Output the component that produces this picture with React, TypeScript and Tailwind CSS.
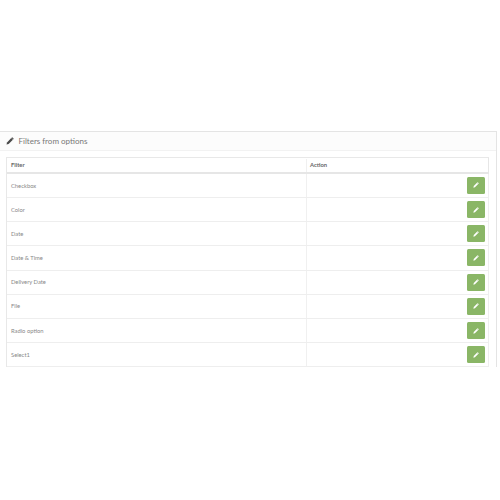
const rows = ["Checkbox", "Color", "Date", "Date & Time", "Delivery Date", "File", "Radio option", "Select1"];

function Pencil({ size, className }: { size: number; className: string }) {
  return (
    <svg width={size} height={size} viewBox="0 0 16 16" className={className} fill="currentColor">
      <path d="M1 15l1-4.2L10.6 2.2 13.8 5.4 5.2 14z" />
      <path d="M11.6 1.2c.5-.5 1.2-.5 1.7 0l1.5 1.5c.5.5.5 1.2 0 1.7l-.6.6L11 1.8z" />
    </svg>
  );
}

export default function App() {
  return (
    <div className="h-[500px] w-[500px] overflow-hidden bg-white pt-[131px] font-['Lato',sans-serif]">
      <div className="w-[497px] border-t border-r border-[#e4e4e4]">
        <div className="flex h-[19px] items-center gap-[4.5px] border-b border-[#f2f2f2] bg-[#fcfcfc] pl-[6px] text-[#777]">
          <Pencil size={8} className="text-[#4a4a4a]" />
          <span className="text-[8px] leading-none">Filters from options</span>
        </div>
        <div className="pt-[6px] pr-[7px] pl-[6px]">
          <div className="border-t border-l border-[#e8e8e8]">
            <div className="flex h-[15.8px] border-r border-b-2 border-[#e6e6e6] pt-[1px] text-[5.8px] font-bold text-[#666]">
              <div className="flex w-[300px] items-center border-r border-[#f0f0f0] pl-[4px]">Filter</div>
              <div className="flex flex-1 items-center pl-[3px]">Action</div>
            </div>
            {rows.map((r) => (
              <div key={r} className="flex h-[24.2px] border-r border-b border-[#eeeeee] text-[5.8px] text-[#888]">
                <div className="flex w-[300px] items-center border-r border-[#f0f0f0] pt-[1px] pl-[4px]">{r}</div>
                <div className="flex flex-1 items-center justify-end pr-[3px]">
                  <button className="flex h-[17px] w-[18px] items-center justify-center rounded-[1.5px] bg-[#8ab666] text-white">
                    <Pencil size={6} className="text-white" />
                  </button>
                </div>
              </div>
            ))}
          </div>
        </div>
      </div>
    </div>
  );
}
